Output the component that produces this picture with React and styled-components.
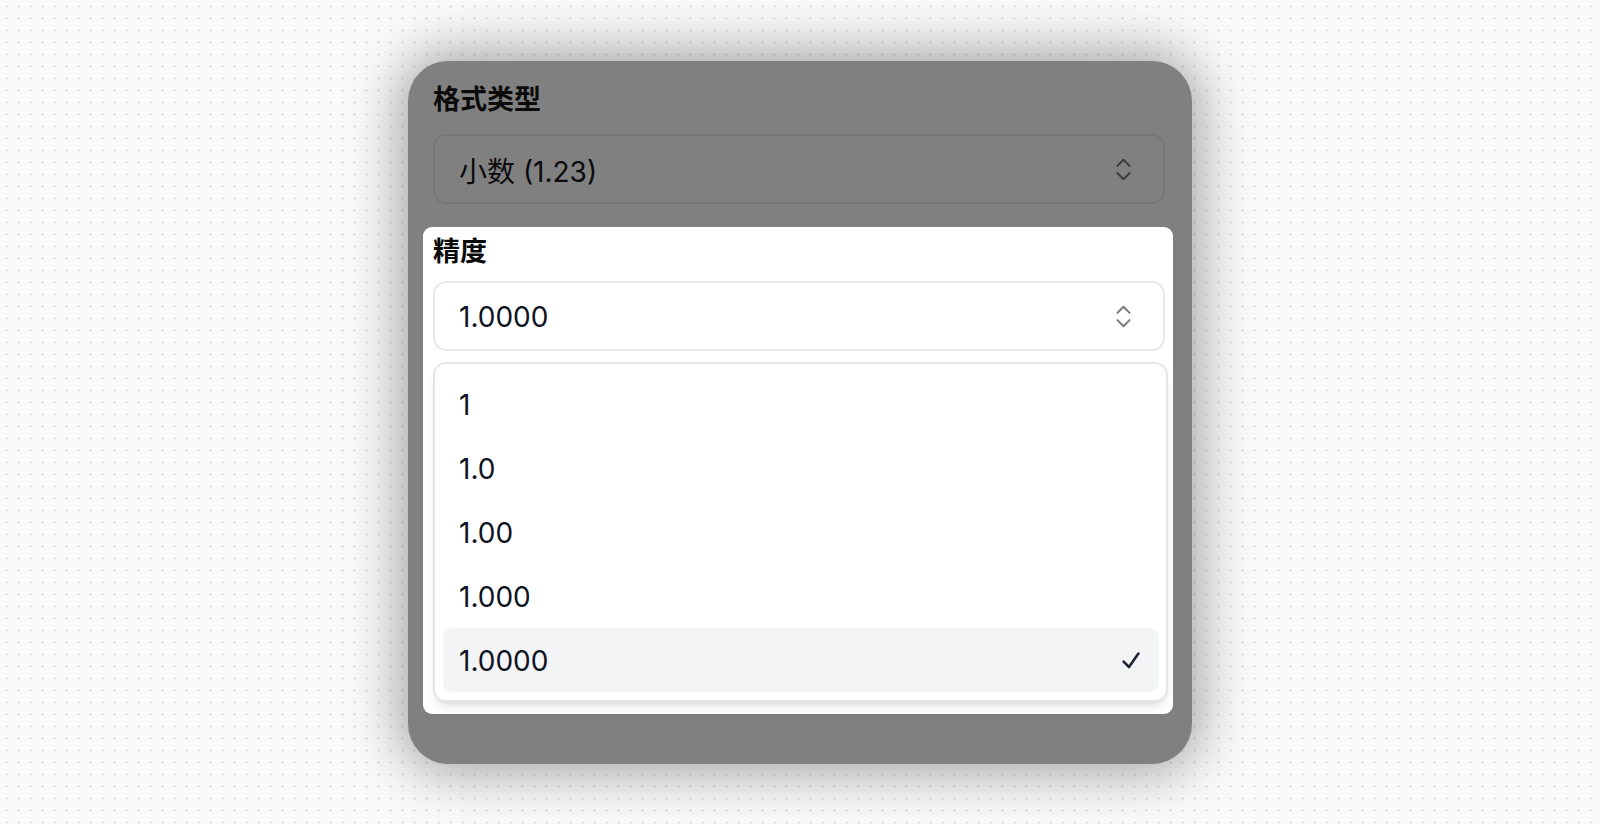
//FORMAT SETTINGS – PRECISION PICKER

import React from "react";
import styled, { createGlobalStyle } from "styled-components";
import { ChevronsUpDown } from "lucide-react";

const precisions = ["1", "1.0", "1.00", "1.000", "1.0000"];

const dots =
  "data:image/svg+xml,%3Csvg xmlns='http://www.w3.org/2000/svg' width='12' height='12'%3E%3Cpath d='M6 5h1v3H6zM5 6h3v1H5z' fill='%23e1e1e1'/%3E%3C/svg%3E";

//CHECK ICON
const Check = () => (
  <svg width="18" height="17" viewBox="0 0 18 17" fill="none">
    <path
      d="M1.6 9.6 7 15 16.4 1.6"
      stroke="#1f2433"
      strokeWidth="2.6"
      strokeLinecap="round"
      strokeLinejoin="round"
    />
  </svg>
);

//APP
const App = () => {
  const selected = "1.0000";
  return (
    <>
      <GlobalStyle />
      <Page>
        <Card>
          <FieldLabel $gap={15}>格式类型</FieldLabel>
          <SelectBox $dimmed>
            <SelectValue $dimmed>小数 (1.23)</SelectValue>
            <ChevronsUpDown size={29} strokeWidth={1.7} color="#3c3c3c" />
          </SelectBox>

          <Spotlight>
            <FieldLabel $gap={10}>精度</FieldLabel>
            <SelectBox>
              <SelectValue>{selected}</SelectValue>
              <ChevronsUpDown size={29} strokeWidth={1.7} color="#7a7a80" />
            </SelectBox>
            <Listbox>
              {precisions.map((p) => (
                <Option key={p} $selected={p === selected}>
                  <span>{p}</span>
                  {p === selected && <Check />}
                </Option>
              ))}
            </Listbox>
          </Spotlight>
        </Card>
      </Page>
    </>
  );
};

//GLOBAL
const GlobalStyle = createGlobalStyle`
  * { box-sizing: border-box; }
  body {
    margin: 0;
    font-family: Inter, "Noto Sans CJK SC", sans-serif;
  }
`;

//PAGE
const Page = styled.div`
  width: 100vw;
  height: 100vh;
  display: flex;
  align-items: center;
  justify-content: center;
  background-color: #fafafa;
  background-image: url("${dots}");
  background-repeat: repeat;
`;

//CARD
const Card = styled.div`
  width: 784px;
  height: 703px;
  padding: 20px 27px 0 25px;
  border-radius: 40px;
  background: #808080;
  box-shadow: 0 0 56px 6px rgba(0, 0, 0, 0.38);
  display: flex;
  flex-direction: column;
`;

//LABEL
const FieldLabel = styled.div`
  font-family: Inter, "Noto Sans CJK SC", sans-serif;
  font-size: 27px;
  font-weight: 700;
  line-height: 38px;
  color: #0b0b0b;
  margin-bottom: ${(p) => p.$gap}px;
`;

//SELECT
const SelectBox = styled.div`
  height: 70px;
  flex-shrink: 0;
  display: flex;
  align-items: center;
  justify-content: space-between;
  padding: 2px 25px 0 24px;
  border-radius: 13px;
  border: 2px solid ${(p) => (p.$dimmed ? "#777777" : "#e8e8ea")};
  background: ${(p) => (p.$dimmed ? "#808080" : "#ffffff")};
`;

const SelectValue = styled.span`
  font-size: 28px;
  color: ${(p) => (p.$dimmed ? "#0a0a0c" : "#101322")};
`;

//SPOTLIGHT
const Spotlight = styled.div`
  margin: 23px -8px 0 -10px;
  padding: 6px 8px 12px 10px;
  border-radius: 9px;
  background: #ffffff;
  display: flex;
  flex-direction: column;
`;

//LISTBOX
const Listbox = styled.div`
  margin: 11px -3px 0 0;
  padding: 8px 7px 8px 8px;
  border: 2px solid #e6e6e8;
  border-radius: 13px;
  background: #ffffff;
  box-shadow: 0 8px 12px -4px rgba(0, 0, 0, 0.12), 0 3px 5px -3px rgba(0, 0, 0, 0.1);
  display: flex;
  flex-direction: column;
`;

//OPTION
const Option = styled.div`
  height: 64px;
  flex-shrink: 0;
  display: flex;
  align-items: center;
  justify-content: space-between;
  padding: 2px 19px 0 16px;
  border-radius: 9px;
  font-size: 28px;
  color: #101322;
  background: ${(p) => (p.$selected ? "#f3f4f6" : "transparent")};
`;

export default App;
